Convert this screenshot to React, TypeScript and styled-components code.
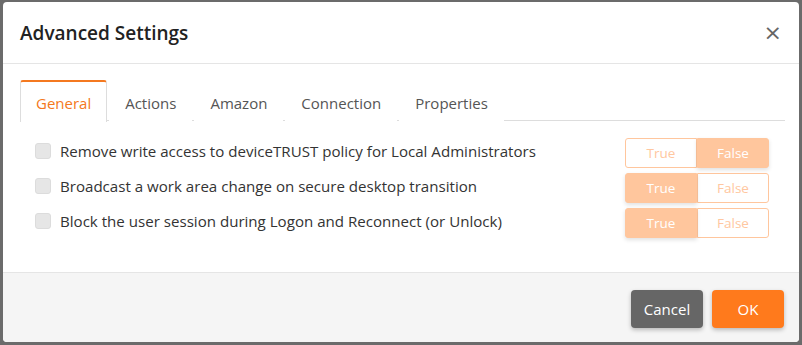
import React, { useState } from "react";
import styled, { createGlobalStyle } from "styled-components";

const Global = createGlobalStyle`
  html, body { margin: 0; padding: 0; background: #6b6b6b; }
  body { font-family: "Open Sans", "Noto Sans", sans-serif; }
  * { box-sizing: border-box; }
`;

const Page = styled.div`
  width: 802px;
  height: 345px;
  padding: 2px 3px 3px 3px;
`;

const Modal = styled.div`
  width: 796px;
  height: 340px;
  background: #fff;
  border-radius: 4px;
  display: flex;
  flex-direction: column;
  overflow: hidden;
`;

const Header = styled.div`
  height: 62px;
  display: flex;
  align-items: center;
  justify-content: space-between;
  padding: 0 17px 0 17px;
  border-bottom: 1px solid #e5e5e5;
`;

const Title = styled.h4`
  margin: 0;
  font-size: 19px;
  font-weight: 600;
  color: #222;
`;

const Close = styled.button`
  border: none;
  background: none;
  padding: 0;
  color: #666;
  font-size: 22px;
  line-height: 1;
  cursor: pointer;
  font-family: "DejaVu Sans", sans-serif;
`;

const Body = styled.div`
  flex: 1;
  padding: 16px 14px 0 17px;
  border-bottom: 1px solid #e5e5e5;
`;

const TabList = styled.div`
  display: flex;
  border-bottom: 1px solid #ddd;
  height: 41px;
`;

const Tab = styled.div<{ $active?: boolean }>`
  padding: 1px 15px 0;
  height: 42px;
  display: flex;
  align-items: center;
  font-size: 15px;
  color: ${(p) => (p.$active ? "#f47920" : "#555")};
  background: #fff;
  border: 1px solid ${(p) => (p.$active ? "#ddd" : "transparent")};
  border-top: 2px solid ${(p) => (p.$active ? "#f47920" : "transparent")};
  border-bottom: none;
  border-radius: 3px 3px 0 0;
  margin-bottom: -1px;
  margin-right: 2px;
`;

const Rows = styled.div`
  padding: 17px 16px 0 15px;
  display: flex;
  flex-direction: column;
  gap: 5px;
`;

const Row = styled.div`
  display: flex;
  align-items: center;
  justify-content: space-between;
  height: 30px;
`;

const Label = styled.label`
  display: flex;
  align-items: center;
  gap: 9px;
  font-size: 15.1px;
  color: #333;
  margin-top: -5px;
`;

const Check = styled.span`
  width: 16px;
  height: 16px;
  border-radius: 3px;
  background: #e6e6e6;
  border: 1px solid #dcdcdc;
  display: inline-block;
`;

const Toggle = styled.div`
  display: flex;
`;

const ToggleBtn = styled.div<{ $on: boolean; $side: "l" | "r" }>`
  width: 72px;
  height: 30px;
  display: flex;
  align-items: center;
  justify-content: center;
  font-size: 13.5px;
  color: ${(p) => (p.$on ? "#fff" : "#ffc7a0")};
  background: ${(p) => (p.$on ? "#ffc69d" : "#fff")};
  border: 1px solid #ffc69d;
  border-radius: ${(p) => (p.$side === "l" ? "3px 0 0 3px" : "0 3px 3px 0")};
  box-shadow: ${(p) => (p.$on ? "0 2px 4px rgba(0,0,0,0.12)" : "none")};
  position: relative;
  z-index: ${(p) => (p.$on ? 1 : 0)};
`;

const Footer = styled.div`
  height: 69px;
  background: #f5f5f5;
  display: flex;
  align-items: center;
  justify-content: flex-end;
  padding: 0 15px 0 0;
  gap: 9px;
`;

const Btn = styled.button<{ $primary?: boolean }>`
  height: 38px;
  min-width: 72px;
  padding: 0 12px;
  border: none;
  border-radius: 4px;
  font-family: inherit;
  font-size: 15px;
  color: #fff;
  background: ${(p) => (p.$primary ? "#ff7a1c" : "#666")};
  box-shadow: 0 2px 4px rgba(0,0,0,0.25);
  margin-top: 2px;
`;

const rows = [
  { text: "Remove write access to deviceTRUST policy for Local Administrators", val: false },
  { text: "Broadcast a work area change on secure desktop transition", val: true },
  { text: "Block the user session during Logon and Reconnect (or Unlock)", val: true },
];

export default function App() {
  const [tab] = useState("General");
  return (
    <>
      <Global />
      <Page>
        <Modal>
          <Header>
            <Title>Advanced Settings</Title>
            <Close aria-label="close">×</Close>
          </Header>
          <Body>
            <TabList>
              {["General", "Actions", "Amazon", "Connection", "Properties"].map((t) => (
                <Tab key={t} $active={t === tab}>{t}</Tab>
              ))}
            </TabList>
            <Rows>
              {rows.map((r) => (
                <Row key={r.text}>
                  <Label>
                    <Check />
                    {r.text}
                  </Label>
                  <Toggle>
                    <ToggleBtn $side="l" $on={r.val}>True</ToggleBtn>
                    <ToggleBtn $side="r" $on={!r.val}>False</ToggleBtn>
                  </Toggle>
                </Row>
              ))}
            </Rows>
          </Body>
          <Footer>
            <Btn>Cancel</Btn>
            <Btn $primary>OK</Btn>
          </Footer>
        </Modal>
      </Page>
    </>
  );
}
